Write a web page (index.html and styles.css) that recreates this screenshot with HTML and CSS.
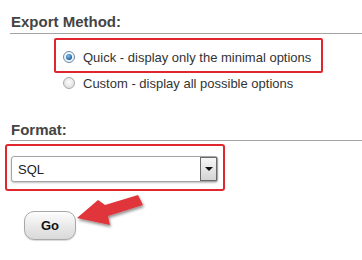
FILE: index.html
```html
<!DOCTYPE html>
<html lang="en">
<head>
  <meta charset="UTF-8">
  <title>Export</title>
  <link rel="stylesheet" href="styles.css">
</head>
<body>
  <div class="section">
    <h3 class="title">Export Method:</h3>
    <div class="options">
      <label class="option highlight">
        <span class="radio checked"></span>
        Quick - display only the minimal options
      </label>
      <label class="option">
        <span class="radio"></span>
        Custom - display all possible options
      </label>
    </div>
  </div>
  <div class="section format">
    <h3 class="title">Format:</h3>
    <div class="select-box">
      <div class="select">
        <span class="value">SQL</span>
        <span class="drop"></span>
      </div>
    </div>
  </div>
  <div class="actions">
    <button class="go">Go</button>
    <svg class="arrow" width="80" height="45" viewBox="0 0 80 45">
      <defs>
        <filter id="sh" x="-20%" y="-20%" width="140%" height="160%">
          <feGaussianBlur in="SourceAlpha" stdDeviation="1.5"/>
          <feOffset dx="1" dy="2"/>
          <feComponentTransfer><feFuncA type="linear" slope="0.45"/></feComponentTransfer>
          <feMerge><feMergeNode/><feMergeNode in="SourceGraphic"/></feMerge>
        </filter>
      </defs>
      <polygon filter="url(#sh)" fill="#e0353a"
        points="2,27 23,9 30,14 63,4 68,14 33,25 35,34"/>
    </svg>
  </div>
</body>
</html>
```

FILE: styles.css
```css
* {
  margin: 0;
  padding: 0;
  box-sizing: border-box;
}
body {
  width: 362px;
  height: 260px;
  background: #fff;
  font-family: 'Liberation Sans', Arial, sans-serif;
  color: #333;
  overflow: hidden;
}
.section {
  padding-top: 12px;
}
.title {
  margin-left: 10px;
  padding-left: 1px;
  font-size: 15px;
  line-height: 20px;
  color: #444;
  border-bottom: 1px solid #a3a3a3;
  padding-bottom: 1px;
}
.options {
  padding: 4px 0 0 54px;
}
.option {
  display: flex;
  align-items: center;
  gap: 8px;
  height: 18px;
  font-size: 13px;
  color: #333;
  padding-left: 7px;
  width: 269px;
  border: 2px solid transparent;
  border-bottom: 0;
}
.option.highlight {
  height: 35px;
  padding-top: 3px;
  border-color: #e0262e;
  border-bottom: 2px solid #e0262e;
  border-radius: 2px;
}
.radio {
  width: 12px;
  height: 12px;
  border-radius: 50%;
  border: 1px solid #a9a9a9;
  background: radial-gradient(circle at 50% 40%, #fdfdfd, #d8d8d8);
  position: relative;
}
.radio.checked {
  border-color: #6f8caa;
  background: radial-gradient(circle at 50% 40%, #fff, #dfe8f0);
}
.radio.checked::after {
  content: "";
  position: absolute;
  left: 2px;
  top: 2px;
  width: 6px;
  height: 6px;
  border-radius: 50%;
  background: radial-gradient(circle at 40% 35%, #7fc4ee, #1f5f9c 70%, #123b66);
}
.format {
  padding-top: 29px;
}
.format .title {
  padding-bottom: 0;
}
.select-box {
  margin: 3px 0 0 5px;
  width: 220px;
  height: 47px;
  border: 2px solid #e0262e;
  border-radius: 3px;
  padding: 10px 0 0 4px;
}
.select {
  display: flex;
  align-items: center;
  justify-content: space-between;
  width: 207px;
  height: 26px;
  border: 1px solid #a5a5a5;
  border-radius: 3px;
  box-shadow: 0 1px 2px rgba(0, 0, 0, 0.25);
  background: #fff;
}
.value {
  padding-left: 6px;
  font-size: 13px;
  color: #222;
}
.drop {
  position: relative;
  width: 17px;
  height: 24px;
  border: 1px solid #6a6a6a;
  background: linear-gradient(#f7f7f7, #d4d4d4);
}
.drop::after {
  content: "";
  position: absolute;
  left: 4px;
  top: 9px;
  border-left: 4px solid transparent;
  border-right: 4px solid transparent;
  border-top: 4px solid #111;
}
.actions {
  position: relative;
  padding: 20px 0 0 24px;
}
.go {
  width: 52px;
  height: 29px;
  border: 1px solid #a8a8a8;
  border-radius: 10px;
  background: linear-gradient(#fdfdfd, #e8e8e8 55%, #d9d9d9);
  box-shadow: 0 1px 1px rgba(0, 0, 0, 0.15);
  font-family: 'Liberation Sans', Arial, sans-serif;
  font-weight: bold;
  font-size: 13px;
  color: #111;
}
.arrow {
  position: absolute;
  left: 75px;
  top: 0;
}
```
